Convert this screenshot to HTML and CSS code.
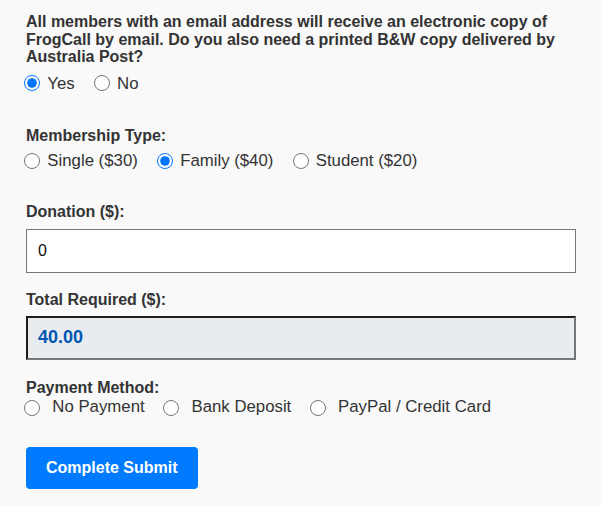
FILE: index.html
```html
<!DOCTYPE html>
<html lang="en">
<head>
<meta charset="utf-8">
<title>FrogCall Membership</title>
<link rel="stylesheet" href="styles.css">
</head>
<body>
<form class="form">
  <p class="question">All members with an email address will receive an electronic copy of FrogCall by email. Do you also need a printed B&amp;W copy delivered by Australia Post?</p>
  <div class="options options-post">
    <label class="opt"><input type="radio" name="post" checked><span>Yes</span></label>
    <label class="opt"><input type="radio" name="post"><span>No</span></label>
  </div>

  <span class="label label-membership">Membership Type:</span>
  <div class="options options-membership">
    <label class="opt"><input type="radio" name="type"><span>Single ($30)</span></label>
    <label class="opt"><input type="radio" name="type" checked><span>Family ($40)</span></label>
    <label class="opt"><input type="radio" name="type"><span>Student ($20)</span></label>
  </div>

  <label class="label label-donation" for="donation">Donation ($):</label>
  <input class="field" id="donation" type="text" value="0">

  <label class="label label-total" for="total">Total Required ($):</label>
  <input class="field field-total" id="total" type="text" value="40.00" readonly>

  <span class="label label-payment">Payment Method:</span>
  <div class="options options-payment">
    <label class="opt"><input type="radio" name="pay"><span>No Payment</span></label>
    <label class="opt"><input type="radio" name="pay"><span>Bank Deposit</span></label>
    <label class="opt"><input type="radio" name="pay"><span>PayPal / Credit Card</span></label>
  </div>

  <button class="submit" type="button">Complete Submit</button>
</form>
</body>
</html>
```

FILE: styles.css
```css
html {
  background: #ffffff;
}

body {
  margin: 0;
  width: 601px;
  min-height: 505px;
  background: #f9f9f9;
  font-family: "Liberation Sans", Arial, sans-serif;
  color: #333333;
}

.form {
  display: flex;
  flex-direction: column;
  align-items: flex-start;
  width: 550px;
  padding: 13px 0 0 26px;
}

.question {
  margin: 0;
  font-size: 16px;
  font-weight: bold;
  line-height: 17.6px;
}

.options {
  display: flex;
  align-items: center;
  height: 19px;
  font-size: 16.8px;
  line-height: 19px;
}

.opt {
  display: flex;
  align-items: center;
  gap: 7px;
  margin-right: 21px;
}

.opt input {
  width: 16px;
  height: 16px;
  margin: 0 0 0 -1.7px;
}

.options-post {
  margin-top: 8.2px;
}

.options-membership {
  margin-top: 6.85px;
}

.options-payment {
  margin-top: 0.95px;
}

.options-payment .opt {
  gap: 12px;
  margin-right: 20.5px;
}

.options-payment .opt input {
  margin-top: 3px;
}

.label {
  display: block;
  font-size: 16px;
  font-weight: bold;
  line-height: 17.6px;
}

.label-membership {
  margin-top: 33.95px;
}

.label-donation {
  margin-top: 32.65px;
}

.label-total {
  margin-top: 17.65px;
}

.label-payment {
  margin-top: 19.05px;
}

.field {
  box-sizing: border-box;
  width: 550px;
  height: 44px;
  margin-top: 8.35px;
  padding: 0 11px;
  border: 1px solid #767676;
  border-radius: 0;
  background: #ffffff;
  font-family: "Liberation Sans", Arial, sans-serif;
  font-size: 16px;
  color: #111111;
  outline: none;
}

.field-total {
  margin-top: 7.75px;
  padding: 0 10px;
  border-width: 2px;
  border-style: solid;
  border-color: #1e1e1e #767676 #767676 #1e1e1e;
  background: #e9ecef;
  font-size: 18px;
  font-weight: bold;
  color: #0056b3;
}

.submit {
  margin-top: 30.8px;
  height: 42px;
  padding: 0 20px;
  border: none;
  border-radius: 4px;
  background: #007bff;
  color: #ffffff;
  font-family: "Liberation Sans", Arial, sans-serif;
  font-size: 16px;
  font-weight: bold;
  cursor: pointer;
}
```
